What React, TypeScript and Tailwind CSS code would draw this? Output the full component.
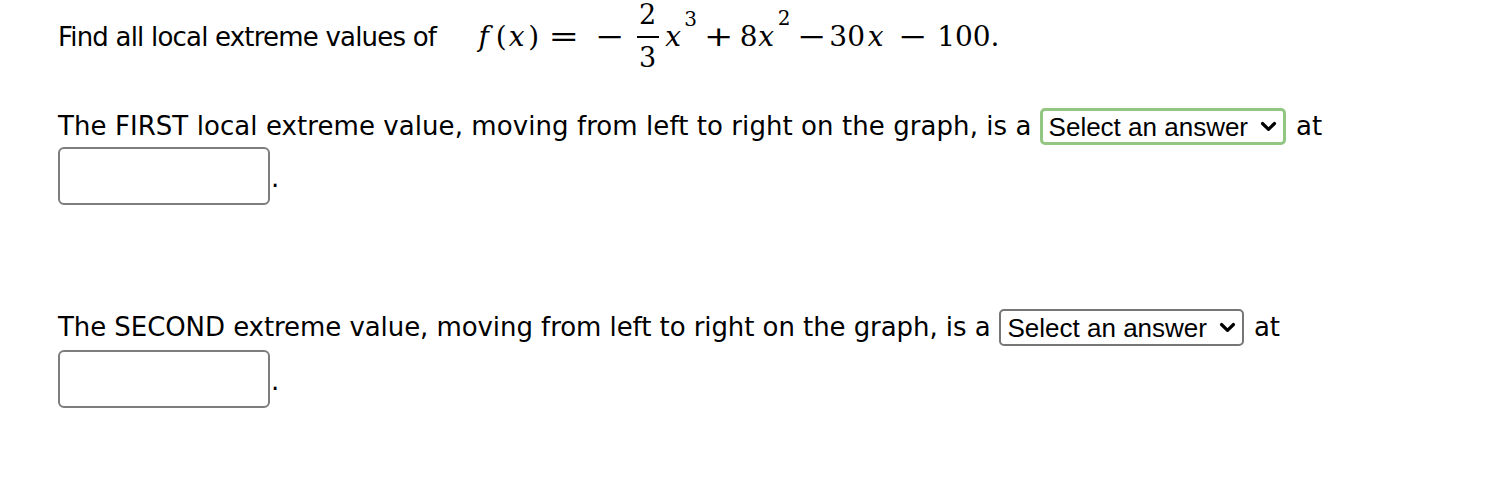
import { ReactElement, ReactNode } from 'react';

const Chevron = (): ReactElement => (
  <svg width="17" height="11" viewBox="0 0 17 11" className="ml-[12px] shrink-0">
    <path d="M2.5 2.5 L8.5 8.3 L14.5 2.5" fill="none" stroke="black" strokeWidth="3.2" strokeLinecap="round" strokeLinejoin="round" />
  </svg>
);

interface AnswerSelectProps {
  focused?: boolean;
}

const AnswerSelect = ({ focused }: AnswerSelectProps): ReactElement => (
  <span
    className={
      "ml-[8px] mr-[10px] inline-flex h-[37px] items-center rounded-[5px] bg-white pr-[6px] font-['Liberation_Sans',sans-serif] text-[26px] leading-none tracking-normal " +
      (focused ? 'border-[3px] border-[#94c683] pl-[6px]' : 'border-2 border-[#767676] pl-[7px]')
    }
  >
    Select an answer
    <Chevron />
  </span>
);

const AnswerBox = (): ReactElement => (
  <div className="flex items-end">
    <span className="block h-[58px] w-[212px] rounded-[6px] border-2 border-[#7d7d7d] bg-white" />
    <span className="mb-[14px] ml-[1px] text-[26px] leading-none">.</span>
  </div>
);

// one glyph cell of the formula, centred in a fixed advance
const Cell = ({ w, children, className = '' }: { w: string; children: ReactNode; className?: string }): ReactElement => (
  <span className={`inline-flex shrink-0 justify-center whitespace-nowrap ${w} ${className}`}>{children}</span>
);

// f(x) = -2/3 x^3 + 8x^2 - 30x - 100
const Formula = (): ReactElement => (
  <span className="inline-flex h-[74px] items-center font-['DejaVu_Serif',serif] text-[28px] leading-none">
    <Cell w="w-[25px]" className="italic">f</Cell>
    <Cell w="w-[10px]">(</Cell>
    <Cell w="w-[21px]" className="italic">x</Cell>
    <Cell w="w-[13px]">)</Cell>
    <Cell w="w-[47px]"><span className="scale-x-[1.3]">=</span></Cell>
    <Cell w="w-[46px]"><span className="scale-x-125">−</span></Cell>
    <Cell w="w-[29px]" className="-translate-y-[1px]">
      <span className="flex flex-col items-center text-[27px]">
        <span className="pb-[8px]">2</span>
        <span className="block h-[2px] w-[22px] bg-black" />
        <span className="pt-[6px]">3</span>
      </span>
    </Cell>
    <Cell w="w-[22px]" className="italic">x</Cell>
    <Cell w="w-[13px]" className="-translate-y-[18px] text-[20px]">3</Cell>
    <Cell w="w-[44px]"><span className="scale-x-125">+</span></Cell>
    <Cell w="w-[15px]">8</Cell>
    <Cell w="w-[20px]" className="italic">x</Cell>
    <Cell w="w-[16px]" className="-translate-y-[19px] text-[20px]">2</Cell>
    <Cell w="w-[39px]"><span className="scale-x-125">−</span></Cell>
    <Cell w="w-[32px]">30</Cell>
    <Cell w="w-[25px]" className="italic">x</Cell>
    <Cell w="w-[49px]"><span className="scale-x-125">−</span></Cell>
    <span>100.</span>
  </span>
);

export default function App(): ReactElement {
  return (
    <div className="min-h-[486px] bg-white px-[58px] font-['DejaVu_Sans',sans-serif] text-[26px] text-black">
      <div className="flex h-[74px] items-center">
        <span className="mr-[35px] tracking-[-0.8px]">Find all local extreme values of</span>
        <Formula />
      </div>

      <div className="mt-[34px]">
        <div className="flex h-[37px] items-center tracking-[0.07px]">
          The FIRST local extreme value, moving from left to right on the graph, is a
          <AnswerSelect focused />
          at
        </div>
        <div className="mt-[2px]">
          <AnswerBox />
        </div>
      </div>

      <div className="mt-[104px]">
        <div className="flex h-[37px] items-center tracking-[-0.07px]">
          The SECOND extreme value, moving from left to right on the graph, is a
          <AnswerSelect />
          at
        </div>
        <div className="mt-[4px]">
          <AnswerBox />
        </div>
      </div>
    </div>
  );
}
